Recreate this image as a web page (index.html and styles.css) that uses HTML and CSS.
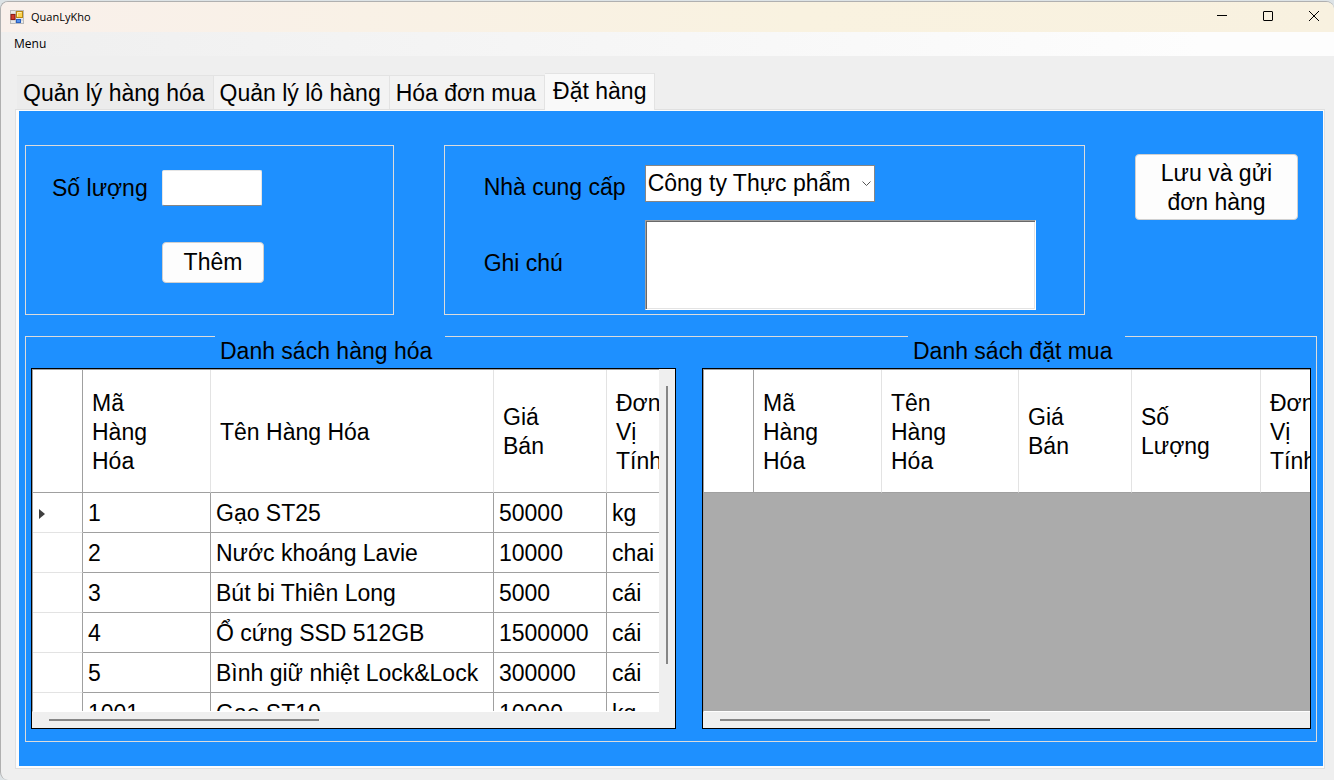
FILE: index.html
```html
<!DOCTYPE html>
<html lang="vi">
<head>
<meta charset="utf-8">
<title>QuanLyKho</title>
<link rel="stylesheet" href="styles.css">
</head>
<body>
<div class="window">
  <header class="titlebar">
    <svg class="app-icon" width="14" height="14" viewBox="0 0 14 14" aria-hidden="true">
      <rect x="0.5" y="0.5" width="13" height="13" fill="#e9e9e9" stroke="#b9b9b9"/>
      <path d="M5.5 0v14M0 10h14M0 4h5" stroke="#c4c4c4" fill="none"/>
      <rect x="6.5" y="1.5" width="6" height="6" fill="#fbd34e" stroke="#b98613"/>
      <path d="M7.5 6.5v-4h4" stroke="#ffeeb0" fill="none"/>
      <rect x="1" y="4.5" width="4" height="5" fill="#d0392b" stroke="#8e1d16"/>
      <rect x="6.5" y="9.5" width="4" height="3" fill="#4f8fee" stroke="#2a5fc0"/>
    </svg>
    <h1 class="title">QuanLyKho</h1>
    <div class="caption-buttons">
      <button type="button" class="caption-button" aria-label="Minimize">
        <svg width="10" height="10" viewBox="0 0 10 10"><path d="M0 4.5h10" stroke="#000"/></svg>
      </button>
      <button type="button" class="caption-button" aria-label="Maximize">
        <svg width="10" height="10" viewBox="0 0 10 10"><rect x="0.5" y="0.5" width="9" height="9" rx="0.5" fill="none" stroke="#000"/></svg>
      </button>
      <button type="button" class="caption-button" aria-label="Close">
        <svg width="10" height="10" viewBox="0 0 10 10"><path d="M0 0l10 10M10 0L0 10" stroke="#000"/></svg>
      </button>
    </div>
  </header>

  <nav class="menubar">
    <button type="button" class="menu-item">Menu</button>
  </nav>

  <main class="content">
    <div class="tabs" role="tablist">
      <button type="button" role="tab" class="tab tab-hover">Quản lý hàng hóa</button>
      <button type="button" role="tab" class="tab">Quản lý lô hàng</button>
      <button type="button" role="tab" class="tab">Hóa đơn mua</button>
      <button type="button" role="tab" class="tab tab-active" aria-selected="true">Đặt hàng</button>
    </div>

    <div class="tab-frame">
      <div class="tab-page" role="tabpanel">
        <div class="order-row">
          <section class="group item-group">
            <label class="label" for="quantity">Số lượng</label>
            <input class="text-input" id="quantity" type="text">
            <button type="button" class="button add-button">Thêm</button>
          </section>

          <section class="group supplier-group">
            <label class="label label-low" for="supplier">Nhà cung cấp</label>
            <div class="select-box">
              <select class="select" id="supplier">
                <option>Công ty Thực phẩm</option>
              </select>
              <svg class="select-arrow" width="9" height="5" viewBox="0 0 9 5" aria-hidden="true"><path d="M0.5 0.5l4 4 4-4" fill="none" stroke="#555"/></svg>
            </div>
            <label class="label label-note" for="note">Ghi chú</label>
            <textarea class="note" id="note"></textarea>
          </section>

          <button type="button" class="button save-button">Lưu và gửi<br>đơn hàng</button>
        </div>

        <section class="group lists">
          <div class="list">
            <h2 class="list-title goods-title">Danh sách hàng hóa</h2>
            <div class="grid grid-scroll-y">
              <div class="view">
                <table class="table">
                  <colgroup><col class="w-head"><col class="w-id"><col class="w-name"><col class="w-price"><col class="w-unit"></colgroup>
                  <thead>
                    <tr><th></th><th>Mã<br>Hàng<br>Hóa</th><th>Tên Hàng Hóa</th><th>Giá<br>Bán</th><th>Đơn<br>Vị<br>Tính</th></tr>
                  </thead>
                  <tbody>
                    <tr><th><svg class="row-marker" width="6" height="10" viewBox="0 0 6 10"><path d="M0 0l6 5-6 5z" fill="#404040"/></svg></th><td>1</td><td>Gạo ST25</td><td>50000</td><td>kg</td></tr>
                    <tr><th></th><td>2</td><td>Nước khoáng Lavie</td><td>10000</td><td>chai</td></tr>
                    <tr><th></th><td>3</td><td>Bút bi Thiên Long</td><td>5000</td><td>cái</td></tr>
                    <tr><th></th><td>4</td><td>Ổ cứng SSD 512GB</td><td>1500000</td><td>cái</td></tr>
                    <tr><th></th><td>5</td><td>Bình giữ nhiệt Lock&amp;Lock</td><td>300000</td><td>cái</td></tr>
                    <tr><th></th><td>1001</td><td>Gạo ST10</td><td>10000</td><td>kg</td></tr>
                  </tbody>
                </table>
              </div>
              <div class="scroll-y"><div class="thumb-y"></div></div>
              <div class="scroll-x"><div class="thumb-x"></div></div>
            </div>
          </div>

          <div class="list">
            <h2 class="list-title order-title">Danh sách đặt mua</h2>
            <div class="grid">
              <div class="view">
                <table class="table">
                  <colgroup><col class="w-head"><col class="w-id"><col class="w-order-name"><col class="w-price"><col class="w-quantity"><col class="w-unit"></colgroup>
                  <thead>
                    <tr><th></th><th>Mã<br>Hàng<br>Hóa</th><th>Tên<br>Hàng<br>Hóa</th><th>Giá<br>Bán</th><th>Số<br>Lượng</th><th>Đơn<br>Vị<br>Tính</th></tr>
                  </thead>
                </table>
              </div>
              <div class="scroll-x"><div class="thumb-x"></div></div>
            </div>
          </div>
        </section>
      </div>
    </div>
  </main>
</div>
</body>
</html>
```
FILE: styles.css
```css
* {
  box-sizing: border-box;
}

body {
  margin: 0;
  padding-top: 1px;
  height: 100vh;
  background: #dde3e6;
  color: #000;
  font: 23px/29px "Liberation Sans", Arial, sans-serif;
}

button,
input,
select,
textarea {
  font: inherit;
  color: inherit;
  margin: 0;
}

.window {
  display: flex;
  flex-direction: column;
  height: 100%;
  border: 1px solid #b0b0b0;
  border-width: 1px 0 0 1px;
  border-radius: 8px 8px 0 8px;
  background: #efefef;
  overflow: hidden;
}

/* Title bar */
.titlebar {
  display: flex;
  align-items: center;
  flex: none;
  height: 30px;
  padding-left: 9px;
  background: linear-gradient(90deg, #f9f0eb, #f9f2e0 60%, #f8f1e0);
}

.title {
  margin: 0 0 0 7px;
  font: 11px/16px "Open Sans", "Noto Sans", sans-serif;
}

.caption-buttons {
  display: flex;
  margin: 0 -3px 0 auto;
}

.caption-button {
  display: flex;
  align-items: center;
  justify-content: center;
  width: 46px;
  height: 30px;
  padding: 0 0 2px;
  border: 0;
  background: none;
}

.menubar {
  display: flex;
  align-items: center;
  flex: none;
  height: 24px;
  padding-left: 13px;
  background: linear-gradient(90deg, #efefef, #fdfdfd 90%);
}

.menu-item {
  padding: 0;
  border: 0;
  background: none;
  font: 12px/16px "Open Sans", "Noto Sans", sans-serif;
}

/* Tabs */
.content {
  display: flex;
  flex: 1;
  flex-direction: column;
  min-height: 0;
  padding: 17px 9px 11px 14px;
}

.tabs {
  display: flex;
  align-items: flex-end;
  padding-left: 2px;
}

.tab {
  height: 34px;
  padding: 2px 8px 0 6px;
  border: 1px solid #e3e3e3;
  border-width: 1px 1px 0 0;
  background: #f3f3f3;
  white-space: nowrap;
}

.tab-hover {
  background: #ececec;
}

.tab-active {
  position: relative;
  height: 37px;
  margin-bottom: -1px;
  padding: 0 8px 2px;
  background: #f9f9f9;
}

.tab-frame {
  display: flex;
  flex: 1;
  min-height: 0;
  padding: 1px 1px 2px 3px;
  border: 1px solid #e0e0e0;
  background: #fcfcfc;
}

.tab-page {
  display: flex;
  flex: 1;
  flex-direction: column;
  gap: 21px;
  min-width: 0;
  padding: 34px 6px 24px;
  background: #1e90ff;
}

.group {
  border: 1px solid #dcdcdc;
}

/* Order form */
.order-row {
  display: grid;
  grid-template-columns: 369fr 642fr 163px;
  column-gap: 50px;
  padding-right: 19px;
}

.item-group {
  display: grid;
  grid-template-columns: 110px 102px;
  align-content: start;
  align-items: center;
  row-gap: 36px;
  padding: 24px 26px;
}

.text-input {
  width: 100px;
  height: 36px;
  padding: 2px 4px;
  border: 1px solid #e5e5e5;
  border-bottom-color: #868686;
  border-radius: 2px;
  background: #fff;
}

.button {
  border: 1px solid #d0d0d0;
  border-radius: 4px;
  background: #fdfdfd;
  padding: 0;
}

.add-button {
  grid-column: 2;
  height: 41px;
}

.save-button {
  align-self: start;
  height: 66px;
  margin-top: 9px;
  padding-top: 2px;
}

.supplier-group {
  display: grid;
  grid-template-columns: 161px 1fr;
  align-items: center;
  row-gap: 18px;
  padding: 19px 48px 4px 39px;
}

.label-low {
  align-self: end;
}

.label-note {
  padding-bottom: 4px;
}

.select-box {
  position: relative;
  width: 230px;
}

.select {
  display: block;
  width: 100%;
  height: 37px;
  padding: 0 16px 0 2px;
  border: 1px solid #868686;
  border-radius: 0;
  background: #fff;
  appearance: none;
}

.select-arrow {
  position: absolute;
  top: 16px;
  right: 4px;
  pointer-events: none;
}

.note {
  display: block;
  width: 100%;
  height: 90px;
  border: 1px solid #fff;
  border-top-color: #a0a0a0;
  border-left-color: #a0a0a0;
  border-radius: 0;
  background: #fff;
  box-shadow: inset 1px 1px #696969, inset -1px -1px #e3e3e3;
  resize: none;
}

/* Lists */
.lists {
  display: grid;
  flex: 1;
  grid-template-columns: 645fr 609fr;
  column-gap: 26px;
  min-height: 0;
  padding: 0 5px 12px;
}

.list {
  display: flex;
  flex-direction: column;
  min-width: 0;
  min-height: 0;
}

.list-title {
  align-self: flex-start;
  margin: -1px 0 2px;
  padding: 1px 13px 0 5px;
  background: #1e90ff;
  font: inherit;
}

.goods-title {
  margin-left: 184px;
}

.order-title {
  margin-left: 206px;
}

.grid {
  display: grid;
  flex: 1;
  grid-template-columns: minmax(0, 1fr);
  grid-template-rows: minmax(0, 1fr) 16px;
  min-height: 0;
  border: 1px solid #000;
  background: #efefef;
}

.grid-scroll-y {
  grid-template-columns: minmax(0, 1fr) 16px;
}

.view {
  overflow: hidden;
  border-top: 1px solid #a0a0a0;
  border-bottom: 1px solid #fff;
  border-left: 1px solid #a0a0a0;
  background: #ababab;
}

.table {
  width: 0;
  table-layout: fixed;
  border-collapse: separate;
  border-spacing: 0;
}

.w-head { width: 50px; }
.w-id { width: 128px; }
.w-name { width: 283px; }
.w-order-name { width: 137px; }
.w-price { width: 113px; }
.w-quantity { width: 129px; }
.w-unit { width: 113px; }

.table th,
.table td {
  border: solid #a0a0a0;
  border-width: 0 1px 1px 0;
  background: #fff;
  font-weight: normal;
  text-align: left;
  white-space: nowrap;
}

.table thead th {
  height: 123px;
  padding: 2px 0 0 9px;
  border-right-color: #e3e3e3;
}

.table thead th:first-child {
  border-right-color: #a0a0a0;
}

.table td,
.table tbody th {
  height: 40px;
  padding: 2px 0 0 5px;
}

.table tbody th {
  padding-left: 6px;
  border-bottom-color: #e3e3e3;
}

.row-marker {
  display: block;
}

.scroll-y {
  padding: 17px 7px;
}

.scroll-x {
  grid-column: 1;
  padding: 7px 17px;
}

.thumb-y {
  height: 90%;
  background: #868686;
}

.thumb-x {
  width: 270px;
  height: 2px;
  background: #868686;
}
```
